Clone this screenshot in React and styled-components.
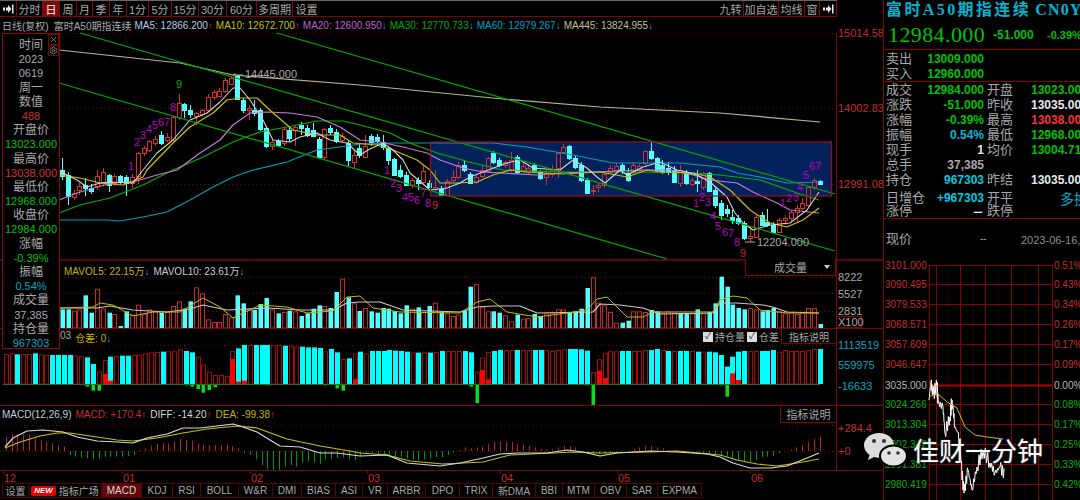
import styled, { createGlobalStyle } from 'styled-components';
import { X, Settings } from 'lucide-react';

const RED = '#c42a2a';
const DARK = '#7a0606';
const CYAN = '#54ffff';
const GREEN = '#00c000';
const TEAL = '#00a8c0';
const GRAY = '#a8a8a8';

const barX = (i) => Math.round(62 + 5.83 * i);
const oiX = (k) => Math.round(5.7 + 5.814 * k);

// candles as screen y: colour top bottom high low
const candles = `c 170 176 158 180|c 175 196 172 205|r 193 197 190 200|r 186 190 183 195|c 185 188 178 196|c 188 191 184 194|r 176 186 170 190|r 172 182 168 186|c 175 185 174 192|r 176 183 174 186|c 176 182 175 184|c 177 183 175 196|r 177 183 174 188|r 153 176 152 184|r 148 153 146 156|r 141 150 140 152|r 139 143 136 146|c 135 143 131 145|r 137 140 133 142|r 117 140 116 141|r 103 117 94 120|c 104 110 103 118|c 110 114 105 118|r 113 116 112 125|r 110 114 109 117|r 97 110 94 112|r 92 97 90 100|r 91 96 88 97|r 80 91 78 93|r 78 84 76 85|c 76 99 75 100|c 100 110 98 113|r 108 110 105 120|c 110 113 100 116|c 110 129 108 131|c 128 146 126 148|r 142 146 140 150|c 141 145 139 147|r 129 143 127 146|c 130 138 126 142|r 127 130 125 146|c 125 128 122 135|c 128 135 125 137|c 130 136 123 137|c 139 157 137 158|r 129 157 128 160|c 128 132 125 135|c 132 141 129 143|r 136 140 133 143|c 143 160 140 166|r 155 162 150 168|c 148 155 144 158|r 146 157 135 158|c 136 142 134 146|c 137 141 134 146|c 142 147 135 150|c 148 160 147 165|c 159 175 158 176|c 170 176 165 178|c 175 185 172 186|r 180 185 178 188|c 180 183 177 190|r 171 182 165 184|c 183 187 180 188|r 187 189 170 193|c 189 195 186 196|r 181 195 179 196|r 177 180 170 182|r 165 177 162 179|c 165 170 160 172|c 174 183 172 184|r 177 182 174 184|r 170 176 165 178|r 158 171 157 172|c 153 162 151 164|c 160 165 158 167|r 162 165 161 168|r 160 170 152 172|c 157 172 155 174|r 166 171 162 173|r 168 172 164 174|c 165 171 163 172|c 172 178 170 180|r 173 177 170 185|r 170 174 165 177|r 153 168 152 178|r 147 152 144 154|c 146 158 145 160|c 158 167 156 169|c 165 180 162 182|c 180 193 178 194|r 190 191 185 195|r 185 187 182 192|r 174 185 172 188|r 168 172 165 174|r 166 170 163 173|c 165 170 163 174|c 173 180 168 182|r 165 172 162 175|r 166 170 164 172|r 151 163 150 165|c 151 158 142 160|c 158 170 157 172|c 165 172 160 174|c 168 172 162 175|c 170 182 166 183|r 170 183 165 187|c 172 183 170 185|r 180 184 178 186|c 181 183 170 192|r 173 187 172 190|c 173 191 172 192|c 190 205 188 208|c 203 215 200 220|c 209 213 205 217|c 217 220 210 224|c 218 223 215 225|c 223 238 221 240|r 236 238 227 242|r 217 237 215 238|c 215 225 212 226|c 222 225 209 227|c 225 232 222 233|r 220 232 218 233|r 218 220 215 225|r 212 218 210 222|r 208 212 205 222|r 203 208 198 210|r 187 205 186 207|r 180 187 178 190|c 181 184 180 185`
  .split('|')
  .map((s) => s.split(' ').map((v, n) => (n ? +v : v)));

const volBars = `c418 c418 r422 r418 c376 c428 r356 r416 c428 r432 c468 c424 r434 r404 r430 r418 r424 c428 r426 r408 r394 c416 c394 r352 r370 r448 r456 r456 r432 r442 c376 c400 r420 c420 c402 c384 r418 c430 r426 c422 r424 c438 c430 c416 c406 r408 c414 c366 r326 c382 r400 c423 r414 c424 c428 c414 c416 c424 c430 c406 r416 c412 r426 c408 r398 c426 r430 r438 r434 c422 c350 r342 r410 r424 c424 c428 r436 r454 c434 r446 r444 c432 c438 r430 r428 r418 r418 c428 c424 c416 c354 r322 r398 r406 r426 r458 c458 c452 r424 r424 r426 c420 c424 r428 r424 r428 c430 c432 r430 c418 r430 c426 c400 c320 c350 c404 c414 c418 r414 r418 c424 c420 c414 r424 r430 r426 r432 r428 r414 r414 c462`.split(' ');

const oiBars = `r42 r40 c43 r42 r42 c40 r43 r45 c45 c45 c45 c45 r47 r48 c52 c72 r94 r60:102 c50:122 r48 c47 c47 r45 r45 r40 r37 r36 c35 r34 r34 r28 c33 c37 r50 r74 r95 r105 r105 r108 r33:57 c25:125 c15:122 r15 c15 c15 c15 r16 r15 c17 r17 r20 c20 c22 c22 c24 r34 c27 c37 r57 c55 r40:118 c35 r40 c33 c33 c33 c30 c32 c33 c35 r37 c38 r37 c38 r36 c33 r33 r33 r33 c33 c37 r95 r52:90 r36:118 c33 c30 r30 r30 c30 r30 r30 c30 c30 r30 r33 r30 r28 c27 c27 c28 c32 r96 r58:92 r38:114 r34 r34 c33 c33 r33 r33 r30 c30 c27 r30 c33 r33 c33 c33 r33 c35 r35 c35 c37 c45 c80 c50:100 c35:120 c33 r33 r33 c33 c33 c30 r35 r30 r33 r33 r33 r30 r27 c27`.split(' ');

const oiNeg = { 14: 140, 15: 152, 16: 152, 31: 136, 32: 140, 33: 147, 34: 158, 35: 150, 36: 142, 45: 136, 55: 136, 57: 145, 58: 152, 80: 140, 81: 190, 100: 136, 101: 197, 123: 136, 124: 170 };

const macdBars = [290, 283, 283, 283, 283, 295, 300, 305, 310, 315, 320, 345, 350, 352, 355, 358, 355, 350, 350, 350, 350, 348, 345, 330, 325, 317, 312, 310, 310, 305, 297, 300, 302, 310, 315, 315, 315, 315, 315, 318, 323, 340, 345, 358, 375, 388, 392, 392, 380, 375, 380, 368, 365, 368, 372, 358, 355, 355, 352, 358, 360, 350, 338, 338, 345, 345, 350, 352, 350, 355, 358, 360, 358, 355, 352, 352, 345, 338, 330, 322, 325, 322, 320, 312, 306, 305, 306, 306, 312, 315, 318, 322, 327, 328, 328, 322, 318, 318, 322, 333, 338, 340, 343, 342, 340, 333, 330, 332, 328, 322, 318, 318, 322, 325, 330, 332, 333, 332, 335, 336, 340, 342, 345, 345, 350, 355, 360, 365, 365, 360, 352, 350, 348, 340, 333, 328, 322, 315, 305, 297, 290];

const ma = {
  ma5: '59,170 63,173 77,180 87,187 100,183 110,182 133,183 143,170 157,153 173,140 190,120 207,113 220,102 233,88 240,88 250,100 263,120 273,140 290,142 300,137 317,133 330,140 347,143 360,155 368,150 383,143 393,150 403,160 410,173 430,190 447,188 460,183 470,177 483,172 507,163 520,160 533,168 560,170 573,160 587,168 597,177 605,183 620,170 627,175 643,167 660,162 677,170 687,172 697,175 710,182 727,197 735,213 743,223 753,230 770,225 790,223 807,210 819,192',
  ma10: '59,175 80,178 100,183 123,185 143,177 147,170 173,143 190,127 213,113 227,100 240,98 257,98 273,113 293,130 317,135 340,135 353,143 377,145 393,150 417,160 430,170 440,183 457,183 477,182 493,175 510,170 527,172 560,174 600,172 627,177 647,170 660,172 693,173 710,177 730,190 750,210 770,223 787,227 803,220 819,208',
  ma20: '59,200 77,193 97,187 113,183 133,182 157,175 177,170 200,153 220,140 233,125 250,113 267,112 290,113 317,117 340,127 360,140 380,142 403,147 427,153 440,160 463,168 483,172 537,175 560,173 593,172 643,170 670,170 693,175 710,180 737,183 753,192 777,203 790,210 819,213',
  ma30: '59,213 80,205 110,198 143,185 173,170 203,157 233,142 260,132 287,127 317,121 343,121 360,125 390,133 410,143 437,153 473,163 503,170 560,172 593,172 643,172 693,173 720,175 760,180 797,193 819,200',
  ma60: '59,220 107,220 120,221 143,217 167,212 190,200 213,187 233,177 253,170 287,162 317,150 347,146 360,144 393,143 430,143 460,143 493,143 527,147 573,155 613,163 650,163 680,163 720,167 737,173 760,177 787,183 819,182',
  ma445: '59,50 180,63 233,75 360,85 503,99 600,107 720,113 820,122',
};

const volMa10 = '59,308 97,308 110,306 133,310 167,312 190,309 203,305 227,310 267,308 300,310 333,310 347,303 360,302 380,302 403,310 460,312 477,307 493,306 520,306 537,313 593,312 600,304 620,305 643,308 660,314 713,313 720,303 737,303 763,305 773,307 787,312 819,313';
const volMa5 = '59,308 93,307 100,303 113,305 133,316 153,312 180,312 203,298 220,307 233,318 260,305 287,307 307,313 333,311 347,297 360,296 373,308 400,312 460,313 477,302 490,299 507,312 537,317 567,313 587,310 597,299 607,297 627,317 643,317 653,312 713,312 720,300 733,296 747,298 760,310 787,313 819,313';
const macdDiff = '5,447 13,438 27,431 43,430 63,432 77,437 97,441 117,442 133,443 147,438 167,434 183,428 200,428 217,426 233,424 243,427 257,432 270,440 280,446 300,447 320,453 337,453 360,456 387,455 407,463 440,466 460,463 483,458 500,454 517,453 547,453 567,450 583,452 600,456 617,453 650,451 677,452 707,454 720,457 733,463 750,468 770,468 787,466 807,458 819,453';
const macdDea = '5,448 20,442 40,436 57,433 70,433 97,437 117,440 133,441 157,438 183,433 207,429 237,426 257,428 287,439 320,446 350,451 360,453 387,455 410,461 443,464 483,462 510,455 553,453 573,452 600,453 650,452 677,451 720,455 737,460 757,464 777,466 797,463 819,459';
const shareAvg = '929,397 937,393 947,402 957,408 965,427 975,435 987,437 1003,439';

// Minute line with a little tick noise, the reference is jagged all along
const sharePoints = () => {
  const keys = [[929, 400], [931, 382], [933, 395], [937, 385], [938, 403], [943, 407], [945, 433], [950, 417], [952, 400], [955, 427], [958, 433], [961, 463], [964, 493], [968, 470], [972, 490], [977, 467], [983, 450], [990, 463], [995, 473], [1000, 467], [1005, 475]];
  const out = [];
  keys.forEach(([x, y], n) => {
    const next = keys[n + 1];
    if (!next) return;
    for (let t = 0; t < 6; t += 1) {
      const wob = t ? Math.sin(n * 7 + t * 3.1) * 7 : 0;
      out.push(`${(x + ((next[0] - x) * t) / 6).toFixed(1)},${(y + ((next[1] - y) * t) / 6 + wob).toFixed(1)}`);
    }
  });
  return out.join(' ');
};

const nineLabels = [
  ['1', 131, 166], ['2', 137, 142], ['3', 143, 135], ['4', 149, 129], ['5', 155, 125], ['6', 161, 122], ['7', 167, 122], ['8', 173, 107], ['9', 179, 84, '#00b000'],
  ['1', 387, 170], ['2', 393, 183], ['3', 399, 188], ['4', 405, 197], ['5', 411, 197], ['6', 417, 200], ['7', 423, 193], ['8', 428, 203], ['9', 435, 205, RED],
  ['1', 696, 203], ['2', 702, 197], ['3', 708, 202], ['4', 713, 216], ['5', 718, 226], ['6', 725, 232], ['7', 731, 233], ['8', 737, 242], ['9', 743, 253, RED],
  ['1', 783, 203], ['2', 789, 198], ['3', 796, 197], ['4', 800, 187], ['5', 806, 175], ['6', 812, 166], ['7', 818, 166],
];

const periods = [['分时', 26], ['日', 17, true], ['周', 17], ['月', 16], ['季', 17], ['年', 17], ['1分', 22], ['5分', 23], ['15分', 27], ['30分', 28], ['60分', 30], ['多周期', 36], ['设置', 27]];
const rightTools = [['九转', 26], ['加自选', 35], ['均线', 26], ['窗', 15]];
const tabs = [['设置', 27], ['指标广场', 73, false, true], ['MACD', 40, true], ['KDJ', 31], ['RSI', 28], ['BOLL', 38], ['W&R', 34], ['DMI', 29], ['BIAS', 34], ['ASI', 27], ['VR', 25], ['ARBR', 38], ['DPO', 34], ['TRIX', 33], ['新DMA', 43], ['BBI', 27], ['MTM', 32], ['OBV', 32], ['SAR', 31], ['EXPMA', 44]];

const tipRows = [['时间'], ['2023'], ['0619'], ['周一'], ['数值'], ['488', '#c83030'], ['开盘价'], ['13023.000', GREEN], ['最高价'], ['13038.000', '#d83030'], ['最低价'], ['12968.000', GREEN], ['收盘价'], ['12984.000', GREEN], ['涨幅'], ['-0.39%', GREEN], ['振幅'], ['0.54%', TEAL], ['成交量'], ['37,385'], ['持仓量'], ['967303', TEAL]];

const quoteRows = [
  ['成交', '12984.000', GREEN, '开盘', '13023.000', GREEN],
  ['涨跌', '-51.000', GREEN, '昨收', '13035.000', '#e8e8e8'],
  ['涨幅', '-0.39%', GREEN, '最高', '13038.000', '#ff3030'],
  ['振幅', '0.54%', '#00b8d8', '最低', '12968.000', GREEN],
  ['现手', '1', '#e8e8e8', '均价', '13004.71', GREEN],
  ['总手', '37,385', GRAY, '', '', GRAY],
  ['持仓', '967303', '#00c8e0', '昨结', '13035.000', '#e8e8e8'],
  ['日增仓', '+967303', '#00c8e0', '开平', '多换', '#00a8c0', 29],
  ['涨停', '－', '#e8e8e8', '跌停', '', GRAY],
];

const shareRows = [
  ['3101.000', '0.51%', 265, RED], ['3090.495', '0.43%', 284, RED], ['3079.533', '0.34%', 304, RED], ['3068.571', '0.26%', 324, RED],
  ['3057.609', '0.17%', 344, RED], ['3046.647', '0.09%', 364, RED], ['3035.000', '0.00%', 385, '#b8b8b8'], ['3024.266', '0.08%', 404, '#00b000'],
  ['3013.304', '0.17%', 424, '#00b000'], ['3002.342', '0.25%', 444, '#00b000'], ['2991.381', '0.33%', 464, '#00b000'], ['2980.419', '0.42%', 484, '#00b000'],
];
const shareCols = [[929, 0], [936, 0], [948, 1], [960, 0], [973, 1], [985, 0], [998, 1], [1011, 0], [1025, 1], [1038, 0], [1052, 0]];

const Global = createGlobalStyle`
  html, body { margin: 0; background: #000; }
  * { box-sizing: border-box; }
`;

const Page = styled.div`
  position: relative;
  display: flex;
  width: 1080px;
  height: 500px;
  overflow: hidden;
  background: #000;
  color: ${GRAY};
  font-family: 'Liberation Sans', 'Noto Sans CJK SC', sans-serif;
  font-size: 10px;
`;

const ChartColumn = styled.main`
  position: relative;
  display: flex;
  flex-direction: column;
  width: 884px;
  overflow: hidden;
  border-right: 1px solid ${DARK};
`;

const Toolbar = styled.nav`
  display: flex;
  justify-content: space-between;
  width: 837px;
  height: 17px;
  border-top: 1px solid #666;
  border-bottom: 1px solid ${DARK};
  border-right: 1px solid ${DARK};
`;

const ToolGroup = styled.div`
  display: flex;
`;

const ToolCell = styled.div`
  display: flex;
  align-items: center;
  justify-content: center;
  width: ${(p) => p.$w}px;
  border-right: 1px solid ${DARK};
  background: ${(p) => (p.$active ? '#800a0a' : 'transparent')};
  color: ${(p) => (p.$active ? '#fff' : GRAY)};
  font-size: 11px;
  &:last-child { border-right: none; }
`;

const Legend = styled.div`
  display: flex;
  align-items: center;
  gap: 3px;
  height: 16px;
  padding-left: 2px;
  font-size: 10px;
  white-space: nowrap;
`;

const LegendItem = styled.span`
  color: ${(p) => p.$color || GRAY};
  margin-left: ${(p) => p.$gap || 0}px;
`;

const Arrow = styled.span`
  color: ${(p) => (p.$up ? '#e03030' : '#22b8d8')};
`;

const Pane = styled.section`
  position: relative;
  height: ${(p) => p.$h}px;
  border-bottom: ${(p) => (p.$heavy ? 2 : 1)}px solid ${(p) => (p.$heavy ? '#5a0505' : DARK)};
`;

const ChartSvg = styled.svg`
  display: block;
  overflow: ${(p) => (p.$spill ? 'visible' : 'hidden')};
`;

const Label = styled.text`
  fill: ${(p) => p.$color || GRAY};
  font-family: 'Liberation Sans', 'Noto Sans CJK SC', sans-serif;
  font-size: ${(p) => p.$size || 10}px;
`;

const PaneHead = styled.div`
  position: absolute;
  top: ${(p) => p.$top}px;
  left: ${(p) => p.$left}px;
  display: flex;
  gap: 4px;
  white-space: nowrap;
`;

const Dropdown = styled.div`
  position: absolute;
  top: -2px;
  left: 745px;
  display: flex;
  align-items: center;
  justify-content: space-between;
  width: 91px;
  height: 17px;
  padding: 0 5px 0 28px;
  border: 1px solid ${DARK};
  border-top: none;
  font-size: 11px;
  background: #000;
`;

const Caret = styled.i`
  width: 0;
  height: 0;
  border: 3px solid transparent;
  border-top: 4px solid #ccc;
  border-bottom: none;
`;

const OiControls = styled.div`
  position: absolute;
  top: 0;
  right: 47px;
  display: flex;
  align-items: center;
  gap: 2px;
  height: 15px;
  padding-left: 2px;
  background: #000;
  font-size: 10px;
`;

const Check = styled.i`
  display: grid;
  place-items: center;
  width: 10px;
  height: 10px;
  background: #ddd;
  color: #334;
  font-size: 9px;
  font-style: normal;
  line-height: 1;
`;

const DocButton = styled.div`
  display: flex;
  align-items: center;
  justify-content: center;
  width: ${(p) => p.$w}px;
  height: ${(p) => p.$h}px;
  border-left: 1px solid ${DARK};
  border-bottom: 1px solid ${DARK};
  font-size: ${(p) => p.$size}px;
`;

const MacdDoc = styled(DocButton)`
  position: absolute;
  top: 0;
  right: 47px;
`;

const TabBar = styled.nav`
  display: flex;
  height: 16px;
  padding-left: 2px;
  margin-top: -1px;
`;

const Tab = styled.div`
  display: flex;
  align-items: center;
  justify-content: center;
  gap: 3px;
  width: ${(p) => p.$w}px;
  height: 15px;
  border: 1px solid #520404;
  border-left: none;
  background: ${(p) => (p.$active ? '#620808' : 'transparent')};
  color: ${(p) => (p.$active ? '#d8d8d8' : GRAY)};
  font-size: 10px;
  &:first-child { border-left: 1px solid #520404; }
`;

const NewBadge = styled.b`
  padding: 0 3px;
  border-radius: 2px;
  background: #e80000;
  color: #fff;
  font-size: 8px;
  font-style: italic;
  line-height: 10px;
`;

const Tip = styled.aside`
  position: absolute;
  top: 33px;
  left: 2px;
  width: 58px;
  height: 316px;
  padding-top: 4px;
  border: 1px solid #8a0808;
  background: #000;
`;

const TipRow = styled.div`
  height: 14.2px;
  line-height: 14.2px;
  text-align: center;
  white-space: nowrap;
  color: ${(p) => p.$color || GRAY};
  font-size: ${(p) => (p.$num ? 11 : 12)}px;
`;

const TipAction = styled.span`
  position: absolute;
  top: ${(p) => p.$top}px;
  right: 0;
  display: grid;
  place-items: center;
  width: 11px;
  height: 11px;
  border: 1px solid #6a0606;
  color: #999;
`;

const QuoteColumn = styled.aside`
  display: flex;
  flex-direction: column;
  width: 196px;
  overflow: hidden;
`;

const Title = styled.h1`
  margin: 0;
  height: 20px;
  padding-left: 2px;
  color: #00b4d0;
  font-family: 'Liberation Serif', 'Noto Sans CJK SC', serif;
  font-size: 16px;
  font-weight: 700;
  letter-spacing: 2.4px;
  line-height: 20px;
  white-space: nowrap;
`;

const TitleCode = styled.span`
  margin-left: 4px;
  letter-spacing: 1.2px;
`;

const PriceRow = styled.div`
  display: flex;
  align-items: center;
  height: 30px;
  padding-left: 4px;
  border-bottom: 1px solid ${DARK};
  color: ${GREEN};
  font-size: 11px;
  font-weight: 700;
  white-space: nowrap;
`;

const BigPrice = styled.span`
  flex: none;
  width: 105px;
  font-family: 'Liberation Serif', serif;
  font-size: 22px;
  font-weight: 400;
  letter-spacing: 0.4px;
`;

const Change = styled.span`
  flex: none;
  width: ${(p) => p.$w}px;
  font-size: ${(p) => p.$size || 11}px;
`;

const QuoteBlock = styled.div`
  padding: ${(p) => p.$pad || 0}px 0 0 2px;
  border-bottom: 1px solid ${DARK};
`;

const QuoteRow = styled.div`
  display: grid;
  grid-template-columns: 98px 3px 44px 60px;
  height: ${(p) => p.$h || 15.1}px;
  align-items: center;
  white-space: nowrap;
`;

const QuoteCell = styled.div`
  display: flex;
  justify-content: space-between;
  align-items: center;
`;

const QuoteLabel = styled.span`
  color: ${GRAY};
  font-size: 13px;
  line-height: 14px;
`;

const QuoteValue = styled.span`
  margin-left: ${(p) => p.$push || 0}px;
  color: ${(p) => p.$color};
  font-size: ${(p) => (p.$push ? 14 : 12)}px;
  font-weight: ${(p) => (p.$push ? 400 : 700)};
`;

const NowRow = styled.div`
  display: grid;
  grid-template-columns: 94px 41px 1fr;
  align-items: center;
  height: 40px;
  padding-left: 2px;
  white-space: nowrap;
`;

const NowDate = styled.span`
  color: #909090;
  font-size: 11px;
`;

const Watermark = styled.div`
  position: absolute;
  left: 864px;
  top: 432px;
  display: flex;
  align-items: center;
  gap: 5px;
  color: #fff;
  font-family: 'Noto Sans CJK SC', sans-serif;
  font-size: 26px;
  line-height: 34px;
  white-space: nowrap;
  text-shadow: 0 0 2px #555;
`;

const WeChatIcon = () => (
  <svg width="44" height="35" viewBox="0 0 44 35">
    <path d="M15 1C6.7 1 0 6.500 0 13.300c0 3.900 2.200 7.300 5.600 9.600L4 28l6-3c1.600.4 3.300.7 5 .7 8.300 0 15-5.500 15-12.400S23.300 1 15 1z" fill="#dcdcdc" />
    <ellipse cx="29.500" cy="24" rx="13.500" ry="10.500" fill="#e4e4e4" stroke="#000" strokeWidth="2" />
    <circle cx="10" cy="9" r="2" fill="#333" />
    <circle cx="20" cy="9" r="2" fill="#333" />
    <circle cx="25" cy="21" r="1.800" fill="#333" />
    <circle cx="34" cy="21" r="1.800" fill="#333" />
  </svg>
);

const EndArrow = () => (
  <svg width="11" height="10" viewBox="0 0 11 10">
    <path d="M0 3.500h2v3H0zM3 3.500h2V1l3.500 4L5 9V6.500H3z" fill="#e8e8e8" />
    <rect x="9" y="0.500" width="1.500" height="9" fill="#e8e8e8" />
  </svg>
);

const Candle = ({ i, d }) => {
  const [kind, top, bottom, hi, lo] = d;
  const x = barX(i);
  if (kind === 'r') {
    return (
      <g stroke="#d43030" fill="none">
        <path d={`M${x + 0.5} ${hi}V${top}M${x + 0.5} ${bottom}V${lo}`} />
        <rect x={x - 1.5} y={top + 0.5} width="4" height={Math.max(bottom - top, 1)} />
      </g>
    );
  }
  return (
    <g fill={CYAN} stroke={CYAN}>
      <path d={`M${x + 0.5} ${hi}V${lo}`} />
      <rect x={x - 1.5} y={top + 0.5} width="4" height={bottom - top} />
    </g>
  );
};

const Line = ({ points, color, w = 1 }) => (
  <polyline points={points} fill="none" stroke={color} strokeWidth={w} strokeLinejoin="round" />
);

const Dotted = ({ y, x1 = 60 }) => (
  <line x1={x1} x2="836" y1={y + 0.5} y2={y + 0.5} stroke="#7a0606" strokeDasharray="1 3" />
);

const AxisLine = ({ top, bottom }) => <line x1="836.5" x2="836.5" y1={top} y2={bottom} stroke={DARK} />;

const Price = () => (
  <ChartSvg $spill width="883" height="227" viewBox="0 33 883 227">
    <Dotted y={33} />
    <Dotted y={108} />
    <Dotted y={184} />
    <rect x="430.500" y="142" width="401" height="54" fill="#03215a" />
    {candles.map((d, i) => <Candle key={i} i={i} d={d} />)}
    <Line points={ma.ma445} color="#bcb48c" w={1.2} />
    <Line points={ma.ma60} color="#00a0b4" w={1.2} />
    <Line points={ma.ma30} color="#00b000" w={1.2} />
    <Line points={ma.ma20} color="#c878d8" w={1.2} />
    <Line points={ma.ma10} color="#c8c000" w={1.2} />
    <Line points={ma.ma5} color="#d4d4d4" w={1.1} />
    <g stroke="#00a800" strokeWidth="1.200">
      <line x1="80" y1="33" x2="835" y2="251" />
      <line x1="277" y1="33" x2="835" y2="194" />
      <line x1="59" y1="83" x2="667" y2="259" />
    </g>
    <rect x="430.500" y="142" width="401" height="54" fill="none" stroke="#a00a28" strokeWidth="1.200" />
    {nineLabels.map(([t, x, y, c], n) => (
      <Label key={n} x={x} y={y + 4} $size={11} textAnchor="middle" $color={c || '#b800c0'}>{t}</Label>
    ))}
    <path d="M233 75h10M233 75l2.500-1.500M745 242h10" stroke="#aaa" />
    <Label x="245" y="78" $size={11}>14445.000</Label>
    <Label x="757" y="246" $size={11}>12204.000</Label>
    <AxisLine top="33" bottom="260" />
    <Label x="838" y="37" $size={11} $color={RED}>15014.585</Label>
    <Label x="838" y="112" $size={11} $color={RED}>14002.830</Label>
    <Label x="838" y="188" $size={11} $color={RED}>12991.085</Label>
  </ChartSvg>
);

const Volume = () => (
  <ChartSvg width="883" height="67" viewBox="0 261 883 67">
    <Dotted y={277} />
    <Dotted y={293} />
    <Dotted y={311} />
    {volBars.map((b, i) => {
      const x = barX(i);
      const y = 170 + +b.slice(1) / 3;
      return b[0] === 'c'
        ? <rect key={i} x={x - 1.5} y={y} width="4.500" height={328 - y} fill={CYAN} />
        : <rect key={i} x={x - 1.5} y={y + 0.5} width="4" height={327.5 - y} fill="none" stroke="#c42a2a" />;
    })}
    <Line points={volMa10} color="#c8c8c8" w={1.2} />
    <Line points={volMa5} color="#c4bc00" />
    <AxisLine top="261" bottom="328" />
    <Label x="838" y="281" $size={11}>8222</Label>
    <Label x="838" y="298" $size={11}>5527</Label>
    <Label x="838" y="315" $size={11}>2831</Label>
    <rect x="836.500" y="316.500" width="25" height="11" fill="none" stroke={DARK} />
    <Label x="838" y="326" $size={11}>X100</Label>
  </ChartSvg>
);

const OpenInterest = () => (
  <ChartSvg width="883" height="76" viewBox="0 329 883 76">
    <Dotted y={345} x1={0} />
    {oiBars.map((b, k) => {
      const [head, fill] = b.split(':');
      const y = 340 + +head.slice(1) / 3;
      const x = oiX(k);
      return (
        <g key={k}>
          {head[0] === 'c'
            ? <rect x={x - 2} y={y} width="5" height={384 - y} fill="#00ffff" />
            : <rect x={x - 1.5} y={y + 0.5} width="4" height={383.5 - y} fill="none" stroke="#a80808" />}
          {fill && <rect x={x - 2} y={340 + fill / 3} width="5" height={384 - 340 - fill / 3} fill="#ff0000" />}
        </g>
      );
    })}
    <line x1="3" x2="820" y1="384.500" y2="384.500" stroke="#3c6a10" />
    {Object.entries(oiNeg).map(([k, z]) => (
      <rect key={k} x={oiX(+k) - 1.5} y="385" width="3.500" height={340 + z / 3 - 385} fill="#00e020" />
    ))}
    <AxisLine top="329" bottom="405" />
    <Label x="838" y="349" $color={TEAL} $size={11}>1113519</Label>
    <Label x="838" y="369" $color={TEAL} $size={11}>559975</Label>
    <Label x="838" y="390" $color={TEAL} $size={11}>-16633</Label>
  </ChartSvg>
);

const Macd = () => (
  <ChartSvg width="883" height="64" viewBox="0 406 883 64">
    <Dotted y={425} x1={0} />
    <Dotted y={451} x1={0} />
    {macdBars.map((z, k) => (
      <line key={k} x1={oiX(k) + 0.5} x2={oiX(k) + 0.5} y1="451" y2={340 + z / 3} stroke={z < 333 ? '#b42222' : '#009a00'} />
    ))}
    <Line points={macdDea} color="#c8c000" w={1.2} />
    <Line points={macdDiff} color="#d8d8d8" w={1.2} />
    <AxisLine top="406" bottom="470" />
    <Label x="838" y="432" $color={RED} $size={11}>+284.4</Label>
    <Label x="838" y="455" $color={RED} $size={11}>+0</Label>
  </ChartSvg>
);

const Dates = () => (
  <ChartSvg width="883" height="13" viewBox="0 471 883 13">
    {[['12', 3], ['01', 122], ['02', 250], ['03', 367], ['04', 500], ['05', 617], ['06', 750]].map(([t, x]) => (
      <g key={t}>
        <line x1={x + 0.5} x2={x + 0.5} y1="471" y2="474" stroke={DARK} />
        <Label x={x + 1} y="482" $size={11} $color={RED}>{t}</Label>
      </g>
    ))}
  </ChartSvg>
);

const MinuteChart = () => (
  <ChartSvg width="196" height="241" viewBox="884 259 196 241">
    {shareCols.map(([x, dotted]) => (
      <line key={x} x1={x + 0.5} x2={x + 0.5} y1="265" y2="500" stroke={DARK} strokeDasharray={dotted ? '1 3' : undefined} />
    ))}
    {shareRows.map(([left, right, y, color]) => (
      <g key={left}>
        <line x1="929" x2="1052" y1={y + 0.5} y2={y + 0.5} stroke={y === 385 ? '#a00808' : DARK} strokeWidth={y === 385 ? 2 : 1} />
        <Label x="885" y={y + 4} $color={color}>{left}</Label>
        <Label x="1054" y={y + 4} $color={color}>{right}</Label>
      </g>
    ))}
    <Line points={sharePoints()} color="#fff" />
    <Line points={shareAvg} color="#c8b840" />
  </ChartSvg>
);

export default function App() {
  return (
    <Page>
      <Global />
      <ChartColumn>
        <Toolbar>
          <ToolGroup>
            <ToolCell $w={17}><EndArrow /></ToolCell>
            {periods.map(([t, w, active]) => <ToolCell key={t} $w={w} $active={active}>{t}</ToolCell>)}
          </ToolGroup>
          <ToolGroup>
            {rightTools.map(([t, w]) => <ToolCell key={t} $w={w}>{t}</ToolCell>)}
            <ToolCell $w={16}><EndArrow /></ToolCell>
          </ToolGroup>
        </Toolbar>
        <Legend>
          <LegendItem>日线(复权)</LegendItem>
          <LegendItem $gap={2}>富时A50期指连续</LegendItem>
          <LegendItem $color="#b8cce0">MA5: 12866.200<Arrow $up>↑</Arrow></LegendItem>
          <LegendItem $color="#c8c000">MA10: 12672.700<Arrow $up>↑</Arrow></LegendItem>
          <LegendItem $color="#c060d0">MA20: 12600.950<Arrow>↓</Arrow></LegendItem>
          <LegendItem $color="#00a800">MA30: 12770.733<Arrow>↓</Arrow></LegendItem>
          <LegendItem $color="#00a0c0">MA60: 12979.267<Arrow>↓</Arrow></LegendItem>
          <LegendItem $color="#c8bc90">MA445: 13824.955<Arrow>↓</Arrow></LegendItem>
        </Legend>

        <Pane $h={228} $heavy><Price /></Pane>

        <Pane $h={68}>
          <Volume />
          <PaneHead $top={2} $left={64}>
            <LegendItem $color="#c4b400">MAVOL5: 22.15万<Arrow>↓</Arrow></LegendItem>
            <LegendItem $color="#c4ccd8">MAVOL10: 23.61万<Arrow>↓</Arrow></LegendItem>
          </PaneHead>
          <Dropdown>成交量<Caret /></Dropdown>
        </Pane>

        <Pane $h={77}>
          <OpenInterest />
          <PaneHead $top={1} $left={60}>
            <LegendItem>03</LegendItem>
            <LegendItem $color="#c4b400">仓差: 0<Arrow>↓</Arrow></LegendItem>
          </PaneHead>
          <OiControls>
            <Check>✓</Check>持仓量
            <Check>✓</Check>仓差
            <DocButton $w={55} $h={15} $size={10}>指标说明</DocButton>
          </OiControls>
        </Pane>

        <Pane $h={65}>
          <Macd />
          <PaneHead $top={3} $left={2}>
            <LegendItem $color="#c4ccd8">MACD(12,26,9)</LegendItem>
            <LegendItem $color="#c43030">MACD: +170.4<Arrow $up>↑</Arrow></LegendItem>
            <LegendItem $color="#d8d8d8">DIFF: -14.20<Arrow $up>↑</Arrow></LegendItem>
            <LegendItem $color="#c4b400">DEA: -99.38<Arrow $up>↑</Arrow></LegendItem>
          </PaneHead>
          <MacdDoc $w={56} $h={17} $size={11}>指标说明</MacdDoc>
        </Pane>

        <Dates />

        <TabBar>
          {tabs.map(([t, w, active, isNew]) => (
            <Tab key={t} $w={w} $active={active}>
              {isNew && <NewBadge>NEW</NewBadge>}
              {t}
            </Tab>
          ))}
        </TabBar>

        <Tip>
          {tipRows.map(([t, color], n) => (
            <TipRow key={n} $color={color} $num={/\d/.test(t)}>{t}</TipRow>
          ))}
          <TipAction $top={0}><X size={9} /></TipAction>
          <TipAction $top={11}><Settings size={9} /></TipAction>
        </Tip>
      </ChartColumn>

      <QuoteColumn>
        <Title>富时A50期指连续<TitleCode>CN0Y</TitleCode></Title>
        <PriceRow>
          <BigPrice>12984.000</BigPrice>
          <Change $w={54} $size={12}>-51.000</Change>
          <Change $w={33}>-0.39%</Change>
        </PriceRow>
        <QuoteBlock $pad={1}>
          <QuoteRow $h={15}>
            <QuoteCell><QuoteLabel>卖出</QuoteLabel><QuoteValue $color={GREEN}>13009.000</QuoteValue></QuoteCell>
          </QuoteRow>
          <QuoteRow $h={15}>
            <QuoteCell><QuoteLabel>买入</QuoteLabel><QuoteValue $color={GREEN}>12960.000</QuoteValue></QuoteCell>
          </QuoteRow>
        </QuoteBlock>
        <QuoteBlock>
          {quoteRows.map(([l1, v1, c1, l2, v2, c2, push]) => (
            <QuoteRow key={l1}>
              <QuoteCell><QuoteLabel>{l1}</QuoteLabel><QuoteValue $color={c1}>{v1}</QuoteValue></QuoteCell>
              <span />
              <QuoteLabel>{l2}</QuoteLabel>
              <QuoteValue $color={c2} $push={push}>{v2}</QuoteValue>
            </QuoteRow>
          ))}
        </QuoteBlock>
        <NowRow>
          <QuoteLabel>现价</QuoteLabel>
          <span>--</span>
          <NowDate>2023-06-16,五</NowDate>
        </NowRow>
        <MinuteChart />
      </QuoteColumn>

      <Watermark>
        <WeChatIcon />
        佳财一分钟
      </Watermark>
    </Page>
  );
}
